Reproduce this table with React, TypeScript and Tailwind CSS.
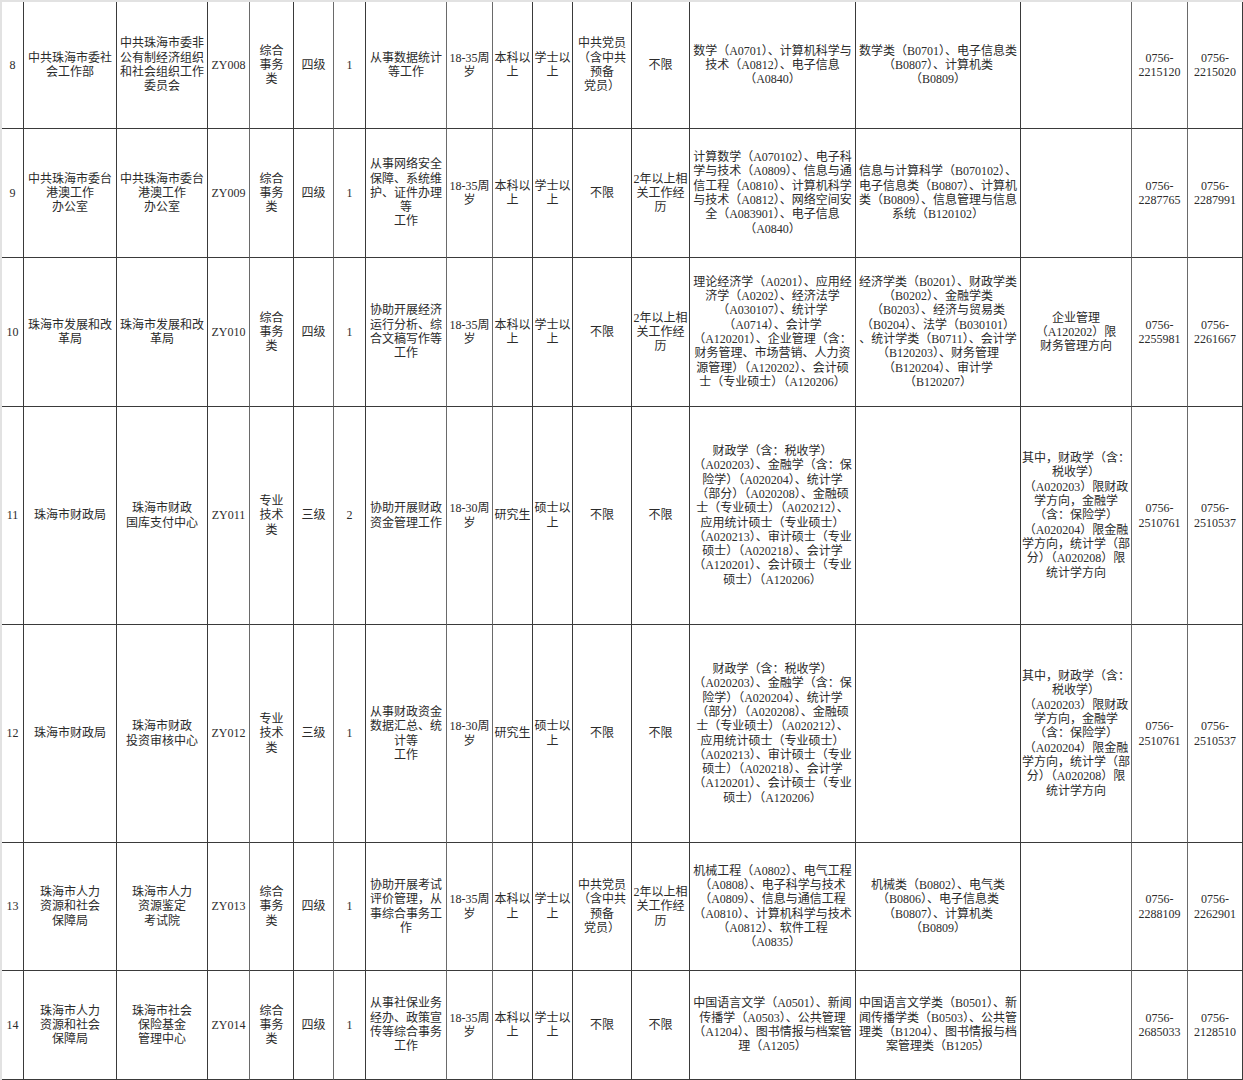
import React from "react";

const R13_11 =
  "财政学（含：税收学）|（A020203）、金融学（含：保|险学）（A020204）、统计学|（部分）（A020208）、金融硕|士（专业硕士）（A020212）、|应用统计硕士（专业硕士）|（A020213）、审计硕士（专业|硕士）（A020218）、会计学|（A120201）、会计硕士（专业|硕士）（A120206）";
const R15_11 =
  "其中，财政学（含：|税收学）|（A020203）限财政|学方向，金融学|（含：保险学）|（A020204）限金融|学方向，统计学（部|分）（A020208）限|统计学方向";

const rows: string[][] = [
  [
    "8",
    "中共珠海市委社|会工作部",
    "中共珠海市委非|公有制经济组织|和社会组织工作|委员会",
    "ZY008",
    "综合|事务|类",
    "四级",
    "1",
    "从事数据统计|等工作",
    "18-35周|岁",
    "本科以|上",
    "学士以|上",
    "中共党员|（含中共|预备|党员）",
    "不限",
    "数学（A0701）、计算机科学与|技术（A0812）、电子信息|（A0840）",
    "数学类（B0701）、电子信息类|（B0807）、计算机类|（B0809）",
    "",
    "0756-|2215120",
    "0756-|2215020",
  ],
  [
    "9",
    "中共珠海市委台|港澳工作|办公室",
    "中共珠海市委台|港澳工作|办公室",
    "ZY009",
    "综合|事务|类",
    "四级",
    "1",
    "从事网络安全|保障、系统维|护、证件办理|等|工作",
    "18-35周|岁",
    "本科以|上",
    "学士以|上",
    "不限",
    "2年以上相|关工作经|历",
    "计算数学（A070102）、电子科|学与技术（A0809）、信息与通|信工程（A0810）、计算机科学|与技术（A0812）、网络空间安|全（A083901）、电子信息|（A0840）",
    "信息与计算科学（B070102）、|电子信息类（B0807）、计算机|类（B0809）、信息管理与信息|系统（B120102）",
    "",
    "0756-|2287765",
    "0756-|2287991",
  ],
  [
    "10",
    "珠海市发展和改|革局",
    "珠海市发展和改|革局",
    "ZY010",
    "综合|事务|类",
    "四级",
    "1",
    "协助开展经济|运行分析、综|合文稿写作等|工作",
    "18-35周|岁",
    "本科以|上",
    "学士以|上",
    "不限",
    "2年以上相|关工作经|历",
    "理论经济学（A0201）、应用经|济学（A0202）、经济法学|（A030107）、统计学|（A0714）、会计学|（A120201）、企业管理（含：|财务管理、市场营销、人力资|源管理）（A120202）、会计硕|士（专业硕士）（A120206）",
    "经济学类（B0201）、财政学类|（B0202）、金融学类|（B0203）、经济与贸易类|（B0204）、法学（B030101）|、统计学类（B0711）、会计学|（B120203）、财务管理|（B120204）、审计学|（B120207）",
    "企业管理|（A120202）限|财务管理方向",
    "0756-|2255981",
    "0756-|2261667",
  ],
  [
    "11",
    "珠海市财政局",
    "珠海市财政|国库支付中心",
    "ZY011",
    "专业|技术|类",
    "三级",
    "2",
    "协助开展财政|资金管理工作",
    "18-30周|岁",
    "研究生",
    "硕士以|上",
    "不限",
    "不限",
    R13_11,
    "",
    R15_11,
    "0756-|2510761",
    "0756-|2510537",
  ],
  [
    "12",
    "珠海市财政局",
    "珠海市财政|投资审核中心",
    "ZY012",
    "专业|技术|类",
    "三级",
    "1",
    "从事财政资金|数据汇总、统|计等|工作",
    "18-30周|岁",
    "研究生",
    "硕士以|上",
    "不限",
    "不限",
    R13_11,
    "",
    R15_11,
    "0756-|2510761",
    "0756-|2510537",
  ],
  [
    "13",
    "珠海市人力|资源和社会|保障局",
    "珠海市人力|资源鉴定|考试院",
    "ZY013",
    "综合|事务|类",
    "四级",
    "1",
    "协助开展考试|评价管理，从|事综合事务工|作",
    "18-35周|岁",
    "本科以|上",
    "学士以|上",
    "中共党员|（含中共|预备|党员）",
    "2年以上相|关工作经|历",
    "机械工程（A0802）、电气工程|（A0808）、电子科学与技术|（A0809）、信息与通信工程|（A0810）、计算机科学与技术|（A0812）、软件工程|（A0835）",
    "机械类（B0802）、电气类|（B0806）、电子信息类|（B0807）、计算机类|（B0809）",
    "",
    "0756-|2288109",
    "0756-|2262901",
  ],
  [
    "14",
    "珠海市人力|资源和社会|保障局",
    "珠海市社会|保险基金|管理中心",
    "ZY014",
    "综合|事务|类",
    "四级",
    "1",
    "从事社保业务|经办、政策宣|传等综合事务|工作",
    "18-35周|岁",
    "本科以|上",
    "学士以|上",
    "不限",
    "不限",
    "中国语言文学（A0501）、新闻|传播学（A0503）、公共管理|（A1204）、图书情报与档案管|理（A1205）",
    "中国语言文学类（B0501）、新|闻传播学类（B0503）、公共管|理类（B1204）、图书情报与档|案管理类（B1205）",
    "",
    "0756-|2685033",
    "0756-|2128510",
  ],
];

// columns whose right border looks lighter/grayer in the reference
const grayCols = new Set([3, 5, 7, 8, 15, 16]);

export default function App() {
  return (
    <div className="w-[1243px] h-[1080px] bg-white overflow-hidden">
      <div className="w-[1243px] h-[1080px] border-l-2 border-t-2 border-[#e2e2e2] grid grid-cols-[22px_93px_91px_42px_44px_40px_32px_81px_46px_40px_40px_59px_58px_166px_165px_111px_56px_55px] grid-rows-[127px_129px_149px_218px_218px_128px_109px] font-['Liberation_Serif','Noto_Sans_CJK_SC',serif] text-[12px] leading-[14.3px] text-[#2b2b2b]">
        {rows.map((row, ri) =>
          row.map((cell, ci) => (
            <div
              key={`${ri}-${ci}`}
              className={
                "min-w-0 flex flex-col items-center justify-center text-center border-r border-b border-b-[#3a3a3a] " +
                (grayCols.has(ci) ? "border-r-[#6a6a6a]" : "border-r-[#3a3a3a]")
              }
            >
              {cell
                ? cell.split("|").map((line, li) => (
                    <div key={li} className="whitespace-nowrap">
                      {line}
                    </div>
                  ))
                : null}
            </div>
          ))
        )}
      </div>
    </div>
  );
}
